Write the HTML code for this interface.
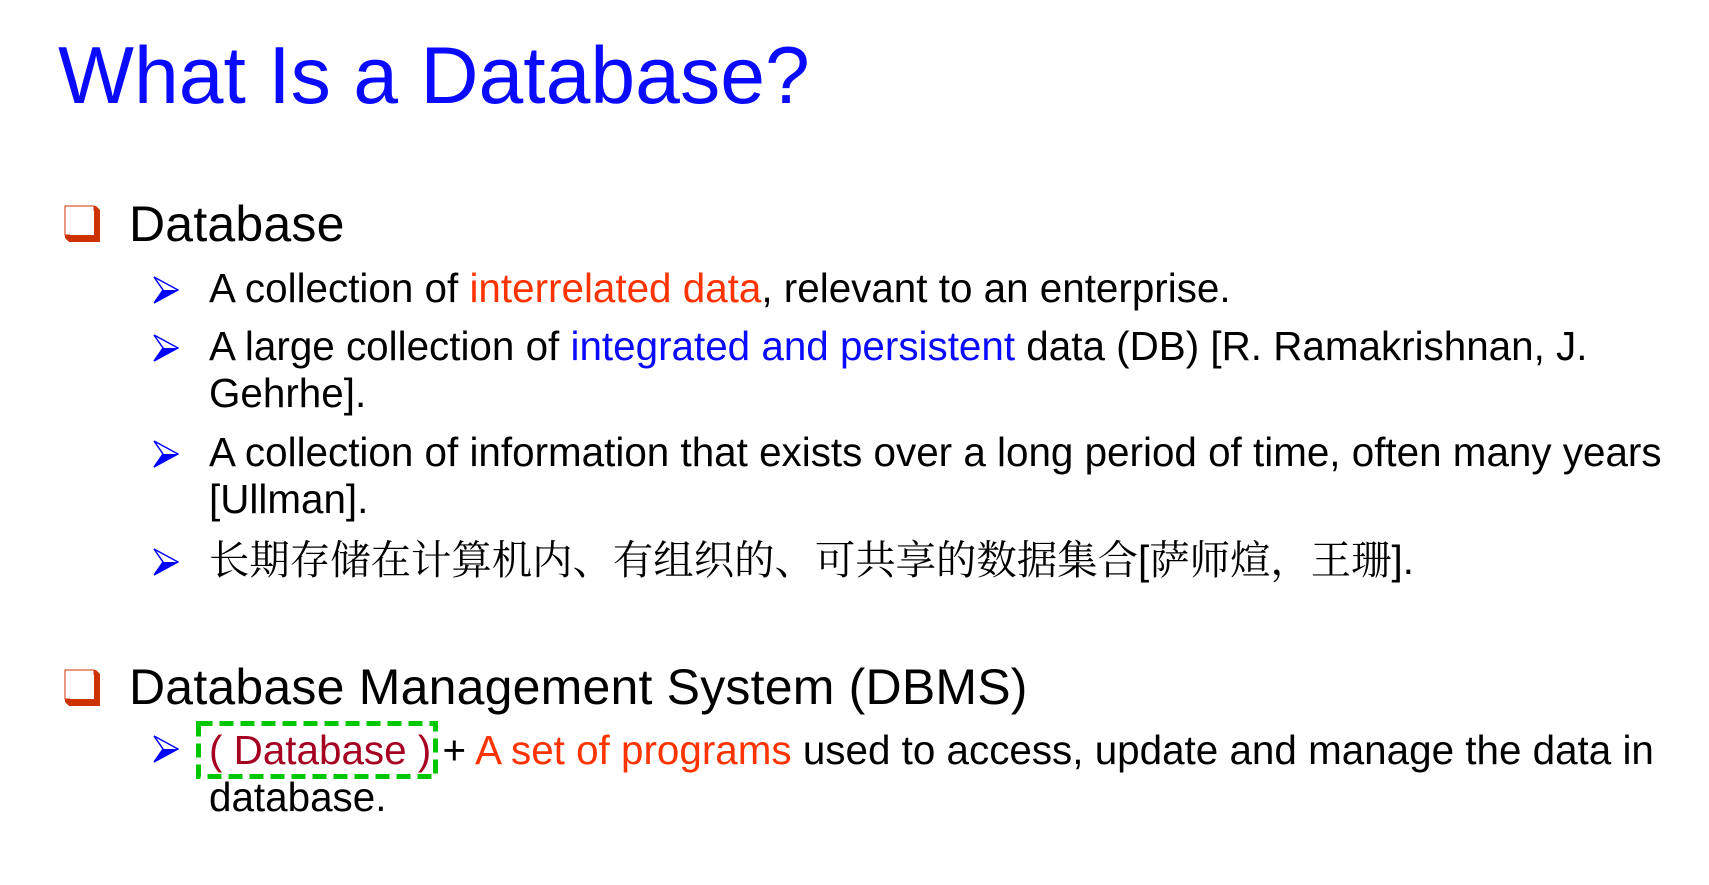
<!DOCTYPE html>
<html><head><meta charset="utf-8"><style>
body{margin:0;width:1709px;height:885px;background:#fff;position:relative;overflow:hidden;font-family:"Liberation Sans","Noto Sans CJK SC",sans-serif;}
.a{position:absolute;white-space:nowrap;}
.t{left:58px;top:36px;font-size:80.5px;line-height:80px;color:#0a0aff;}
.h{left:129px;font-size:50px;line-height:50px;color:#000;letter-spacing:0.2px}
.cb{position:absolute;left:63px;width:38px;height:37px;}
.b{left:209px;font-size:40.4px;line-height:47px;color:#000;}
.ar{position:absolute;left:153px;width:26px;height:28px;}
.r{color:#ff3300}.bl{color:#0a0aff}.dr{color:#a50021}
</style></head><body>
<div class="a t">What Is a Database?</div>

<svg class="cb" style="top:205px" viewBox="0 0 38 37"><path d="M2 1H33L37 5V37H6L2 33Z" fill="#cc3300"/><rect x="2" y="1" width="29" height="29" fill="#fff" stroke="#cc3300" stroke-width="1"/><rect x="7" y="6" width="24" height="24" fill="#fff"/></svg>
<div class="a h" style="top:199px">Database</div>

<svg class="ar" style="top:276px" viewBox="0 0 26 28"><path d="M1 1L25 14L1 27L10 14Z" fill="#fff" stroke="#0000ff" stroke-width="1.5"/><path d="M10 14L25 14L1 27Z" fill="#0000ff"/></svg>
<div class="a b" style="top:265px">A collection of <span class="r">interrelated data</span>, relevant to an enterprise.</div>

<svg class="ar" style="top:334px" viewBox="0 0 26 28"><path d="M1 1L25 14L1 27L10 14Z" fill="#fff" stroke="#0000ff" stroke-width="1.5"/><path d="M10 14L25 14L1 27Z" fill="#0000ff"/></svg>
<div class="a b" style="top:323px">A large collection of <span class="bl">integrated and persistent</span> data (DB) [R. Ramakrishnan, J.<br>Gehrhe].</div>

<svg class="ar" style="top:440px" viewBox="0 0 26 28"><path d="M1 1L25 14L1 27L10 14Z" fill="#fff" stroke="#0000ff" stroke-width="1.5"/><path d="M10 14L25 14L1 27Z" fill="#0000ff"/></svg>
<div class="a b" style="top:429px">A collection of information that exists over a long period of time, often many years<br>[Ullman].</div>

<svg class="ar" style="top:548px" viewBox="0 0 26 28"><path d="M1 1L25 14L1 27L10 14Z" fill="#fff" stroke="#0000ff" stroke-width="1.5"/><path d="M10 14L25 14L1 27Z" fill="#0000ff"/></svg>
<div class="a b" style="top:537px;font-family:'Liberation Sans','Noto Serif CJK SC',serif">长期存储在计算机内、有组织的、可共享的数据集合[萨师煊，王珊].</div>

<svg class="cb" style="top:669px" viewBox="0 0 38 37"><path d="M2 1H33L37 5V37H6L2 33Z" fill="#cc3300"/><rect x="2" y="1" width="29" height="29" fill="#fff" stroke="#cc3300" stroke-width="1"/><rect x="7" y="6" width="24" height="24" fill="#fff"/></svg>
<div class="a h" style="top:662px">Database Management System (DBMS)</div>

<svg style="position:absolute;left:196px;top:721px" width="242" height="58"><rect x="2.5" y="2.5" width="237" height="53" fill="none" stroke="#00c800" stroke-width="5" stroke-dasharray="14 7"/></svg>
<svg class="ar" style="top:735px" viewBox="0 0 26 28"><path d="M1 1L25 14L1 27L10 14Z" fill="#fff" stroke="#0000ff" stroke-width="1.5"/><path d="M10 14L25 14L1 27Z" fill="#0000ff"/></svg>
<div class="a b" style="top:727px"><span class="dr">( Database )</span> + <span class="r">A set of programs</span> used to access, update and manage the data in<br>database.</div>
</body></html>
